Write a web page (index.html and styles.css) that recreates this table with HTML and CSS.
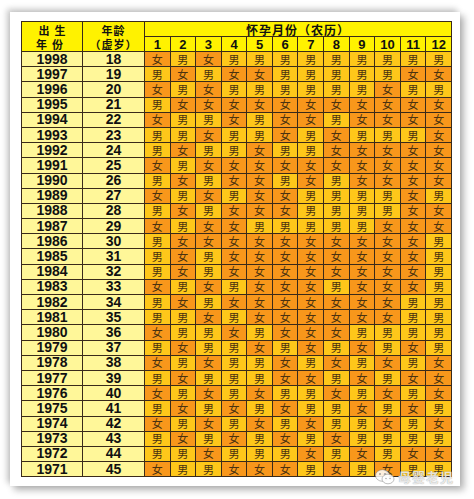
FILE: index.html
```html
<!DOCTYPE html>
<html lang="zh">
<head>
<meta charset="utf-8">
<link rel="stylesheet" href="styles.css">
</head>
<body>
<div class="stage">
<div class="paper">
<table class="chart">
<colgroup><col class="c-year"><col class="c-age"><col span="12" class="c-m"></colgroup>
<thead>
<tr class="h1"><th rowspan="2" class="hl sp">出生<br>年份</th><th rowspan="2" class="hl">年龄<br>（虚岁）</th><th colspan="12" class="title">怀孕月份（农历）</th></tr>
<tr class="h2"><th>1</th><th>2</th><th>3</th><th>4</th><th>5</th><th>6</th><th>7</th><th>8</th><th>9</th><th>10</th><th>11</th><th>12</th></tr>
</thead>
<tbody>
<tr><td class="y">1998</td><td class="y">18</td><td class="f">女</td><td class="m">男</td><td class="f">女</td><td class="m">男</td><td class="m">男</td><td class="m">男</td><td class="m">男</td><td class="m">男</td><td class="m">男</td><td class="m">男</td><td class="m">男</td><td class="m">男</td></tr>
<tr><td class="y">1997</td><td class="y">19</td><td class="m">男</td><td class="f">女</td><td class="m">男</td><td class="f">女</td><td class="f">女</td><td class="m">男</td><td class="m">男</td><td class="m">男</td><td class="m">男</td><td class="m">男</td><td class="f">女</td><td class="f">女</td></tr>
<tr><td class="y">1996</td><td class="y">20</td><td class="f">女</td><td class="m">男</td><td class="f">女</td><td class="m">男</td><td class="m">男</td><td class="m">男</td><td class="m">男</td><td class="m">男</td><td class="m">男</td><td class="f">女</td><td class="m">男</td><td class="m">男</td></tr>
<tr><td class="y">1995</td><td class="y">21</td><td class="m">男</td><td class="f">女</td><td class="f">女</td><td class="f">女</td><td class="f">女</td><td class="f">女</td><td class="f">女</td><td class="f">女</td><td class="f">女</td><td class="f">女</td><td class="f">女</td><td class="f">女</td></tr>
<tr><td class="y">1994</td><td class="y">22</td><td class="f">女</td><td class="m">男</td><td class="m">男</td><td class="f">女</td><td class="m">男</td><td class="f">女</td><td class="f">女</td><td class="m">男</td><td class="f">女</td><td class="f">女</td><td class="f">女</td><td class="f">女</td></tr>
<tr><td class="y">1993</td><td class="y">23</td><td class="m">男</td><td class="m">男</td><td class="f">女</td><td class="m">男</td><td class="m">男</td><td class="f">女</td><td class="m">男</td><td class="f">女</td><td class="m">男</td><td class="m">男</td><td class="m">男</td><td class="f">女</td></tr>
<tr><td class="y">1992</td><td class="y">24</td><td class="m">男</td><td class="f">女</td><td class="m">男</td><td class="m">男</td><td class="f">女</td><td class="m">男</td><td class="m">男</td><td class="f">女</td><td class="f">女</td><td class="f">女</td><td class="f">女</td><td class="f">女</td></tr>
<tr><td class="y">1991</td><td class="y">25</td><td class="f">女</td><td class="m">男</td><td class="f">女</td><td class="f">女</td><td class="f">女</td><td class="f">女</td><td class="f">女</td><td class="f">女</td><td class="f">女</td><td class="f">女</td><td class="f">女</td><td class="f">女</td></tr>
<tr><td class="y">1990</td><td class="y">26</td><td class="m">男</td><td class="f">女</td><td class="m">男</td><td class="f">女</td><td class="f">女</td><td class="m">男</td><td class="f">女</td><td class="m">男</td><td class="f">女</td><td class="f">女</td><td class="f">女</td><td class="f">女</td></tr>
<tr><td class="y">1989</td><td class="y">27</td><td class="f">女</td><td class="m">男</td><td class="f">女</td><td class="m">男</td><td class="f">女</td><td class="f">女</td><td class="m">男</td><td class="m">男</td><td class="m">男</td><td class="m">男</td><td class="f">女</td><td class="m">男</td></tr>
<tr><td class="y">1988</td><td class="y">28</td><td class="m">男</td><td class="f">女</td><td class="m">男</td><td class="f">女</td><td class="f">女</td><td class="f">女</td><td class="m">男</td><td class="m">男</td><td class="m">男</td><td class="m">男</td><td class="f">女</td><td class="f">女</td></tr>
<tr><td class="y">1987</td><td class="y">29</td><td class="f">女</td><td class="m">男</td><td class="f">女</td><td class="f">女</td><td class="m">男</td><td class="m">男</td><td class="m">男</td><td class="m">男</td><td class="m">男</td><td class="f">女</td><td class="f">女</td><td class="f">女</td></tr>
<tr><td class="y">1986</td><td class="y">30</td><td class="m">男</td><td class="f">女</td><td class="f">女</td><td class="f">女</td><td class="f">女</td><td class="f">女</td><td class="f">女</td><td class="f">女</td><td class="f">女</td><td class="f">女</td><td class="f">女</td><td class="m">男</td></tr>
<tr><td class="y">1985</td><td class="y">31</td><td class="m">男</td><td class="f">女</td><td class="m">男</td><td class="f">女</td><td class="f">女</td><td class="f">女</td><td class="f">女</td><td class="f">女</td><td class="f">女</td><td class="f">女</td><td class="f">女</td><td class="m">男</td></tr>
<tr><td class="y">1984</td><td class="y">32</td><td class="m">男</td><td class="f">女</td><td class="m">男</td><td class="f">女</td><td class="f">女</td><td class="f">女</td><td class="f">女</td><td class="f">女</td><td class="f">女</td><td class="f">女</td><td class="f">女</td><td class="m">男</td></tr>
<tr><td class="y">1983</td><td class="y">33</td><td class="f">女</td><td class="m">男</td><td class="f">女</td><td class="m">男</td><td class="f">女</td><td class="f">女</td><td class="f">女</td><td class="m">男</td><td class="f">女</td><td class="f">女</td><td class="f">女</td><td class="m">男</td></tr>
<tr><td class="y">1982</td><td class="y">34</td><td class="m">男</td><td class="f">女</td><td class="m">男</td><td class="f">女</td><td class="f">女</td><td class="f">女</td><td class="f">女</td><td class="f">女</td><td class="f">女</td><td class="f">女</td><td class="m">男</td><td class="m">男</td></tr>
<tr><td class="y">1981</td><td class="y">35</td><td class="m">男</td><td class="m">男</td><td class="f">女</td><td class="m">男</td><td class="f">女</td><td class="f">女</td><td class="f">女</td><td class="f">女</td><td class="f">女</td><td class="f">女</td><td class="m">男</td><td class="m">男</td></tr>
<tr><td class="y">1980</td><td class="y">36</td><td class="f">女</td><td class="m">男</td><td class="m">男</td><td class="f">女</td><td class="m">男</td><td class="f">女</td><td class="f">女</td><td class="f">女</td><td class="m">男</td><td class="m">男</td><td class="m">男</td><td class="m">男</td></tr>
<tr><td class="y">1979</td><td class="y">37</td><td class="m">男</td><td class="f">女</td><td class="m">男</td><td class="m">男</td><td class="f">女</td><td class="m">男</td><td class="f">女</td><td class="m">男</td><td class="f">女</td><td class="m">男</td><td class="f">女</td><td class="m">男</td></tr>
<tr><td class="y">1978</td><td class="y">38</td><td class="f">女</td><td class="m">男</td><td class="f">女</td><td class="m">男</td><td class="m">男</td><td class="f">女</td><td class="m">男</td><td class="f">女</td><td class="m">男</td><td class="f">女</td><td class="m">男</td><td class="f">女</td></tr>
<tr><td class="y">1977</td><td class="y">39</td><td class="m">男</td><td class="f">女</td><td class="m">男</td><td class="m">男</td><td class="m">男</td><td class="f">女</td><td class="f">女</td><td class="m">男</td><td class="f">女</td><td class="m">男</td><td class="f">女</td><td class="f">女</td></tr>
<tr><td class="y">1976</td><td class="y">40</td><td class="f">女</td><td class="m">男</td><td class="f">女</td><td class="m">男</td><td class="f">女</td><td class="m">男</td><td class="m">男</td><td class="f">女</td><td class="m">男</td><td class="f">女</td><td class="m">男</td><td class="f">女</td></tr>
<tr><td class="y">1975</td><td class="y">41</td><td class="m">男</td><td class="f">女</td><td class="m">男</td><td class="f">女</td><td class="m">男</td><td class="f">女</td><td class="m">男</td><td class="m">男</td><td class="f">女</td><td class="m">男</td><td class="f">女</td><td class="m">男</td></tr>
<tr><td class="y">1974</td><td class="y">42</td><td class="f">女</td><td class="m">男</td><td class="f">女</td><td class="m">男</td><td class="f">女</td><td class="m">男</td><td class="f">女</td><td class="m">男</td><td class="m">男</td><td class="f">女</td><td class="m">男</td><td class="f">女</td></tr>
<tr><td class="y">1973</td><td class="y">43</td><td class="m">男</td><td class="f">女</td><td class="m">男</td><td class="f">女</td><td class="m">男</td><td class="f">女</td><td class="m">男</td><td class="f">女</td><td class="m">男</td><td class="m">男</td><td class="m">男</td><td class="m">男</td></tr>
<tr><td class="y">1972</td><td class="y">44</td><td class="m">男</td><td class="m">男</td><td class="f">女</td><td class="m">男</td><td class="m">男</td><td class="m">男</td><td class="f">女</td><td class="m">男</td><td class="f">女</td><td class="m">男</td><td class="f">女</td><td class="f">女</td></tr>
<tr><td class="y">1971</td><td class="y">45</td><td class="f">女</td><td class="m">男</td><td class="m">男</td><td class="f">女</td><td class="f">女</td><td class="f">女</td><td class="m">男</td><td class="f">女</td><td class="m">男</td><td class="f">女</td><td class="m">男</td><td class="m">男</td></tr>
</tbody>
</table>
<div class="watermark">
<svg class="wx" width="20" height="16" viewBox="0 0 20 16"><ellipse cx="7.5" cy="6.5" rx="7" ry="5.8" fill="rgba(255,255,255,0.85)" stroke="rgba(120,120,120,0.6)" stroke-width="0.8"/><ellipse cx="13" cy="10" rx="6" ry="4.8" fill="rgba(255,255,255,0.9)" stroke="rgba(120,120,120,0.6)" stroke-width="0.8"/><circle cx="5" cy="5" r="0.9" fill="#999"/><circle cx="10" cy="5" r="0.9" fill="#999"/><circle cx="11" cy="9.5" r="0.7" fill="#999"/><circle cx="15" cy="9.5" r="0.7" fill="#999"/></svg>
<span class="wm-text">母婴老児</span>
</div>
</div>
</div>
</body>
</html>
```
FILE: styles.css
```css
html, body {
  margin: 0;
  padding: 0;
  background: #ffffff;
}
.stage {
  width: 474px;
  height: 499px;
  padding: 12px 16px 0 10px;
  box-sizing: border-box;
}
.paper {
  position: relative;
  width: 450px;
  height: 474px;
  padding: 9px 0 0 11px;
  box-sizing: border-box;
  background: #ffffff;
  box-shadow: -3px -3px 6px rgba(0,0,0,0.22), 4px 4px 7px rgba(0,0,0,0.3);
}
.chart {
  border-collapse: collapse;
  table-layout: fixed;
  width: 430px;
  font-family: "Liberation Sans", Arial, "Noto Sans CJK SC", sans-serif;
  color: #111;
}
.c-year { width: 61px; }
.c-age { width: 62px; }
.c-m { width: 25.58px; }
.chart th, .chart td {
  border: 1px solid #3a2a1a;
  padding: 0;
  text-align: center;
  vertical-align: middle;
  overflow: hidden;
  white-space: nowrap;
}
.chart thead th {
  background: #fff200;
  font-weight: bold;
}
.h1 { height: 15px; }
.h2 { height: 15px; }
.hl {
  font-family: "Noto Sans CJK SC", sans-serif;
  font-size: 11px;
  line-height: 14px;
  letter-spacing: 1px;
}
.hl.sp {
  letter-spacing: 5px;
  text-indent: 5px;
}
.title {
  font-family: "Noto Sans CJK SC", sans-serif;
  font-size: 12px;
  line-height: 13px;
  letter-spacing: 1px;
}
.h2 th {
  font-size: 13px;
  line-height: 13px;
}
.chart tbody tr { height: 15.2px; }
.chart td.y {
  background: #fff799;
  font-weight: bold;
  font-size: 14px;
  line-height: 13px;
}
.chart td.m, .chart td.f {
  font-family: "Noto Sans CJK SC", sans-serif;
  font-size: 11px;
  line-height: 13px;
  color: #4a3210;
  font-weight: 400;
}
.chart td.m { background: #fec71a; }
.chart td.f { background: #f8971b; }
.watermark {
  position: absolute;
  left: 365px;
  top: 455px;
  display: flex;
  align-items: center;
  gap: 3px;
}
.wm-text {
  font-family: "Noto Sans CJK SC", sans-serif;
  font-size: 13px;
  font-weight: bold;
  color: rgba(255,255,255,0.8);
  text-shadow: 0 0 1px rgba(90,90,90,0.7);
  letter-spacing: 1px;
}
```
